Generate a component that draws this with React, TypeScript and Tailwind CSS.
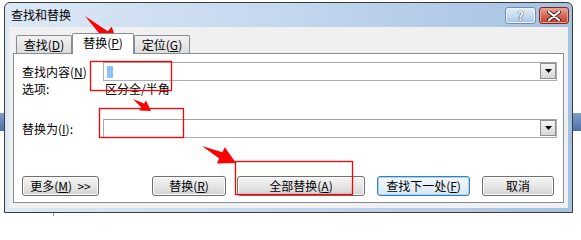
import React from 'react';

type Pt = [number, number];

// red annotation arrow: thin tail widening into a head at the tip
function arrowPoints(tail: Pt, tip: Pt, head: number, headW: number, shaftW: number) {
  const dx = tip[0] - tail[0];
  const dy = tip[1] - tail[1];
  const len = Math.hypot(dx, dy);
  const ux = dx / len;
  const uy = dy / len;
  const nx = -uy;
  const ny = ux;
  const bx = tip[0] - ux * head;
  const by = tip[1] - uy * head;
  const pts: Pt[] = [
    tail,
    [bx + nx * shaftW, by + ny * shaftW],
    [bx + nx * headW, by + ny * headW],
    tip,
    [bx - nx * headW, by - ny * headW],
    [bx - nx * shaftW, by - ny * shaftW],
  ];
  return pts.map((p) => `${p[0].toFixed(1)},${p[1].toFixed(1)}`).join(' ');
}

function Key({ children }: { children: React.ReactNode }) {
  return <span className="underline underline-offset-1">{children}</span>;
}

function Combo({ children }: { children?: React.ReactNode }) {
  return (
    <div className="flex-1 h-[19px] flex items-start border border-[#abadb3] border-t-[#a2a2a2] bg-white">
      <div className="flex-1 h-full flex items-center pl-[2px]">{children}</div>
      <div className="w-[16px] h-[16px] flex items-center justify-center border border-[#8f8f8f] bg-gradient-to-b from-[#f4f4f4] to-[#d8d8d8]">
        <svg width="7" height="4" viewBox="0 0 7 4">
          <polygon points="0,0 7,0 3.5,4" fill="#000" />
        </svg>
      </div>
    </div>
  );
}

function Btn({
  w,
  className = '',
  focused = false,
  children,
}: {
  w: string;
  className?: string;
  focused?: boolean;
  children: React.ReactNode;
}) {
  return (
    <button
      className={`${w} ${className} h-[20px] flex items-center justify-center rounded-[3px] border text-[12px] leading-[14px] text-black ${
        focused
          ? 'border-[#3c7fb1] bg-gradient-to-b from-[#f4f9fd] to-[#d6e9f6] shadow-[inset_0_0_0_1px_#9fd8f5]'
          : 'border-[#707070] bg-gradient-to-b from-[#f4f4f4] via-[#e6e6e6] to-[#d2d2d2] shadow-[inset_0_0_0_1px_#fcfcfc]'
      }`}
    >
      {children}
    </button>
  );
}

export default function App() {
  return (
    <div className="relative w-[581px] h-[216px] bg-white overflow-hidden pl-[4px] pt-[2px] font-['Noto_Sans_CJK_SC',sans-serif] text-[12px] leading-[14px] text-black">
      {/* desktop bits behind the dialog */}
      <div className="absolute left-0 top-[113px] w-[4px] h-[18px] bg-gradient-to-b from-[#7f9fcb] to-[#4d70a6]" />
      <div className="absolute right-0 top-[113px] w-[8px] h-[18px] bg-gradient-to-b from-[#7f9fcb] to-[#4d70a6]" />
      <div className="absolute left-[53px] top-[213px] w-px h-[3px] bg-[#9a9a9a]" />

      {/* window */}
      <div className="w-[569px] h-[211px] flex flex-col border border-[#3b3b3b] rounded-t-[6px] bg-gradient-to-r from-[#dce8f5] via-[#c3d7ee] to-[#a5c1e2]">
        {/* title bar */}
        <div className="h-[24px] flex items-start pl-[6px] pr-[3px]">
          <div className="flex-1 pt-[5px] text-[12px] leading-[14px]">查找和替换</div>
          <div className="flex gap-[3px] pt-[4px]">
            <div className="w-[31px] h-[17px] flex items-center justify-center rounded-[3px] border border-[#6f8eb5] bg-gradient-to-b from-[#e6effa] via-[#c7daf0] to-[#a9c4e4] shadow-[inset_0_0_0_1px_#eef4fb]">
              <span className="text-[13px] leading-[13px] font-bold text-white [text-shadow:0_0_1px_#2c3e55,0_0_1px_#2c3e55]">
                ?
              </span>
            </div>
            <div className="w-[30px] h-[17px] flex items-center justify-center rounded-[3px] border border-[#7b2a22] bg-gradient-to-b from-[#e9a99b] via-[#d36a58] to-[#c0392b] shadow-[inset_0_0_0_1px_#e9a093]">
              <svg width="14" height="10" viewBox="0 0 14 10">
                <path d="M2 1 L12 9 M12 1 L2 9" stroke="#4a1a14" strokeWidth="4" strokeLinecap="round" />
                <path d="M2 1 L12 9 M12 1 L2 9" stroke="#fff" strokeWidth="2.2" strokeLinecap="round" />
              </svg>
            </div>
          </div>
        </div>

        {/* client area */}
        <div className="flex-1 mx-[4px] mb-[4px] bg-[#f0f0f0] px-[4px] pt-[6px] pb-[5px] flex flex-col">
          {/* tabs */}
          <div className="h-[20px] flex items-end pl-[3px]">
            <div className="w-[56px] h-[18px] flex items-center justify-center border border-b-0 border-[#898c95] rounded-t-[2px] bg-gradient-to-b from-[#f3f3f3] to-[#dcdcdc]">
              查找(<Key>D</Key>)
            </div>
            <div className="relative z-10 w-[62px] h-[21px] -mb-px flex items-center justify-center border border-b-0 border-[#898c95] rounded-t-[2px] bg-white pb-[2px]">
              替换(<Key>P</Key>)
            </div>
            <div className="w-[56px] h-[18px] flex items-center justify-center border border-b-0 border-[#898c95] rounded-t-[2px] bg-gradient-to-b from-[#f3f3f3] to-[#dcdcdc]">
              定位(<Key>G</Key>)
            </div>
          </div>

          {/* tab page */}
          <div className="flex-1 flex flex-col bg-white border border-[#898c95] pt-[8px] pl-[8px] pr-[6px]">
            <div className="flex items-center">
              <div className="w-[81px]">
                查找内容(<Key>N</Key>)
              </div>
              <Combo>
                <div className="w-[6px] h-[12px] ml-[1px] bg-[#8fc1f7]" />
              </Combo>
            </div>

            <div className="flex mt-[1px]">
              <div className="w-[83px]">选项:</div>
              <div>区分全/半角</div>
            </div>

            <div className="flex items-center mt-[23px]">
              <div className="w-[81px]">
                替换为(<Key>I</Key>):
              </div>
              <Combo />
            </div>

            <div className="flex mt-[38px]">
              <Btn w="w-[77px]">
                更多(<Key>M</Key>)&nbsp;&nbsp;&gt;&gt;
              </Btn>
              <Btn w="w-[74px]" className="ml-[53px]">
                替换(<Key>R</Key>)
              </Btn>
              <Btn w="w-[128px]" className="ml-[11px]">
                全部替换(<Key>A</Key>)
              </Btn>
              <Btn w="w-[93px]" className="ml-[12px]" focused>
                查找下一处(<Key>F</Key>)
              </Btn>
              <Btn w="w-[72px]" className="ml-[12px]">
                取消
              </Btn>
            </div>
          </div>
        </div>
      </div>

      {/* red annotations drawn over the screenshot */}
      <svg className="absolute left-0 top-0 pointer-events-none" width="581" height="216" viewBox="0 0 581 216">
        <rect x="90.5" y="61.5" width="81" height="29" fill="none" stroke="#f00" strokeWidth="1.3" />
        <rect x="99.5" y="108.5" width="84" height="29" fill="none" stroke="#f00" strokeWidth="1.3" />
        <rect x="235.5" y="161.5" width="117" height="33" fill="none" stroke="#f00" strokeWidth="1.3" />
        <polygon points={arrowPoints([85, 16], [119, 47], 19, 10, 4)} fill="#f00" />
        <polygon points={arrowPoints([133, 99], [151, 111], 10, 6, 2.5)} fill="#f00" />
        <polygon points={arrowPoints([202, 146], [236, 163], 17, 9, 3.5)} fill="#f00" />
      </svg>
    </div>
  );
}
